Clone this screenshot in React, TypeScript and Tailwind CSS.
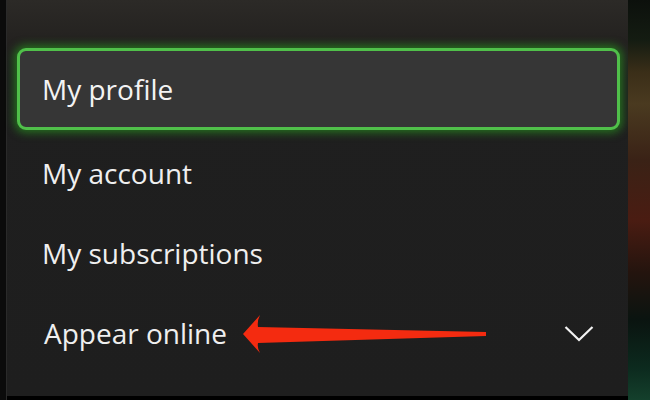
import React from "react";

const items = ["My account", "My subscriptions"];

function Chevron() {
  return (
    <svg width="30" height="17" viewBox="0 0 30 17" fill="none">
      <polyline points="1.5,2 15,15 28.5,2" stroke="#f2f2f2" strokeWidth="2.2" strokeLinejoin="miter" />
    </svg>
  );
}

function RedArrow() {
  return (
    <svg
      className="absolute left-[240px] top-[312px]"
      width="250"
      height="44"
      viewBox="0 0 250 44"
    >
      <path
        d="M3 22 L20 3 Q17 9 18 15 L246 20 L246 24 L18 31 Q17 36 20 41 Z"
        fill="#f42b10"
      />
    </svg>
  );
}

export default function App() {
  return (
    <div
      className="relative flex w-[650px] h-[400px] bg-black overflow-hidden"
      style={{ fontFamily: '"Open Sans", "Noto Sans", sans-serif' }}
    >
      {/* left edge */}
      <div className="w-[7px] h-full bg-[#0b0b0b] border-r border-[#2a2a2a]" />

      {/* menu panel */}
      <div className="flex flex-col w-[621px] h-[396px] pt-[48px] pl-[10px] pr-[8px] bg-[linear-gradient(180deg,#2c2a27_0px,#242220_40px,#1f1f1f_80px,#1e1e1e_100%)]">
        {/* focused item */}
        <div className="flex items-center h-[82px] pl-[22px] rounded-[9px] border-[3px] border-[#50c04a] bg-[#363636] shadow-[0_0_8px_3px_rgba(40,150,30,0.65)]">
          <span className="text-[28px] text-[#f3f3f3] leading-none pb-[1px]">My profile</span>
        </div>

        <div className="h-[3px]" />

        {items.map((label) => (
          <div key={label} className="flex items-center h-[80px] pl-[25px]">
            <span className="text-[28px] text-[#efefef] leading-none">{label}</span>
          </div>
        ))}

        <div className="flex items-center justify-between h-[80px] pl-[27px] pr-[26px]">
          <span className="text-[28px] text-[#efefef] leading-none">Appear online</span>
          <Chevron />
        </div>
      </div>

      {/* background art peeking on the right */}
      <div className="flex-1 h-full bg-[linear-gradient(180deg,#0c100c_0%,#141c12_10%,#3a2e18_18%,#4a3a20_26%,#3a2216_40%,#4a1c12_55%,#24140e_68%,#0a1410_80%,#0c2a1e_92%,#14402c_100%)]" />

      <RedArrow />
    </div>
  );
}
